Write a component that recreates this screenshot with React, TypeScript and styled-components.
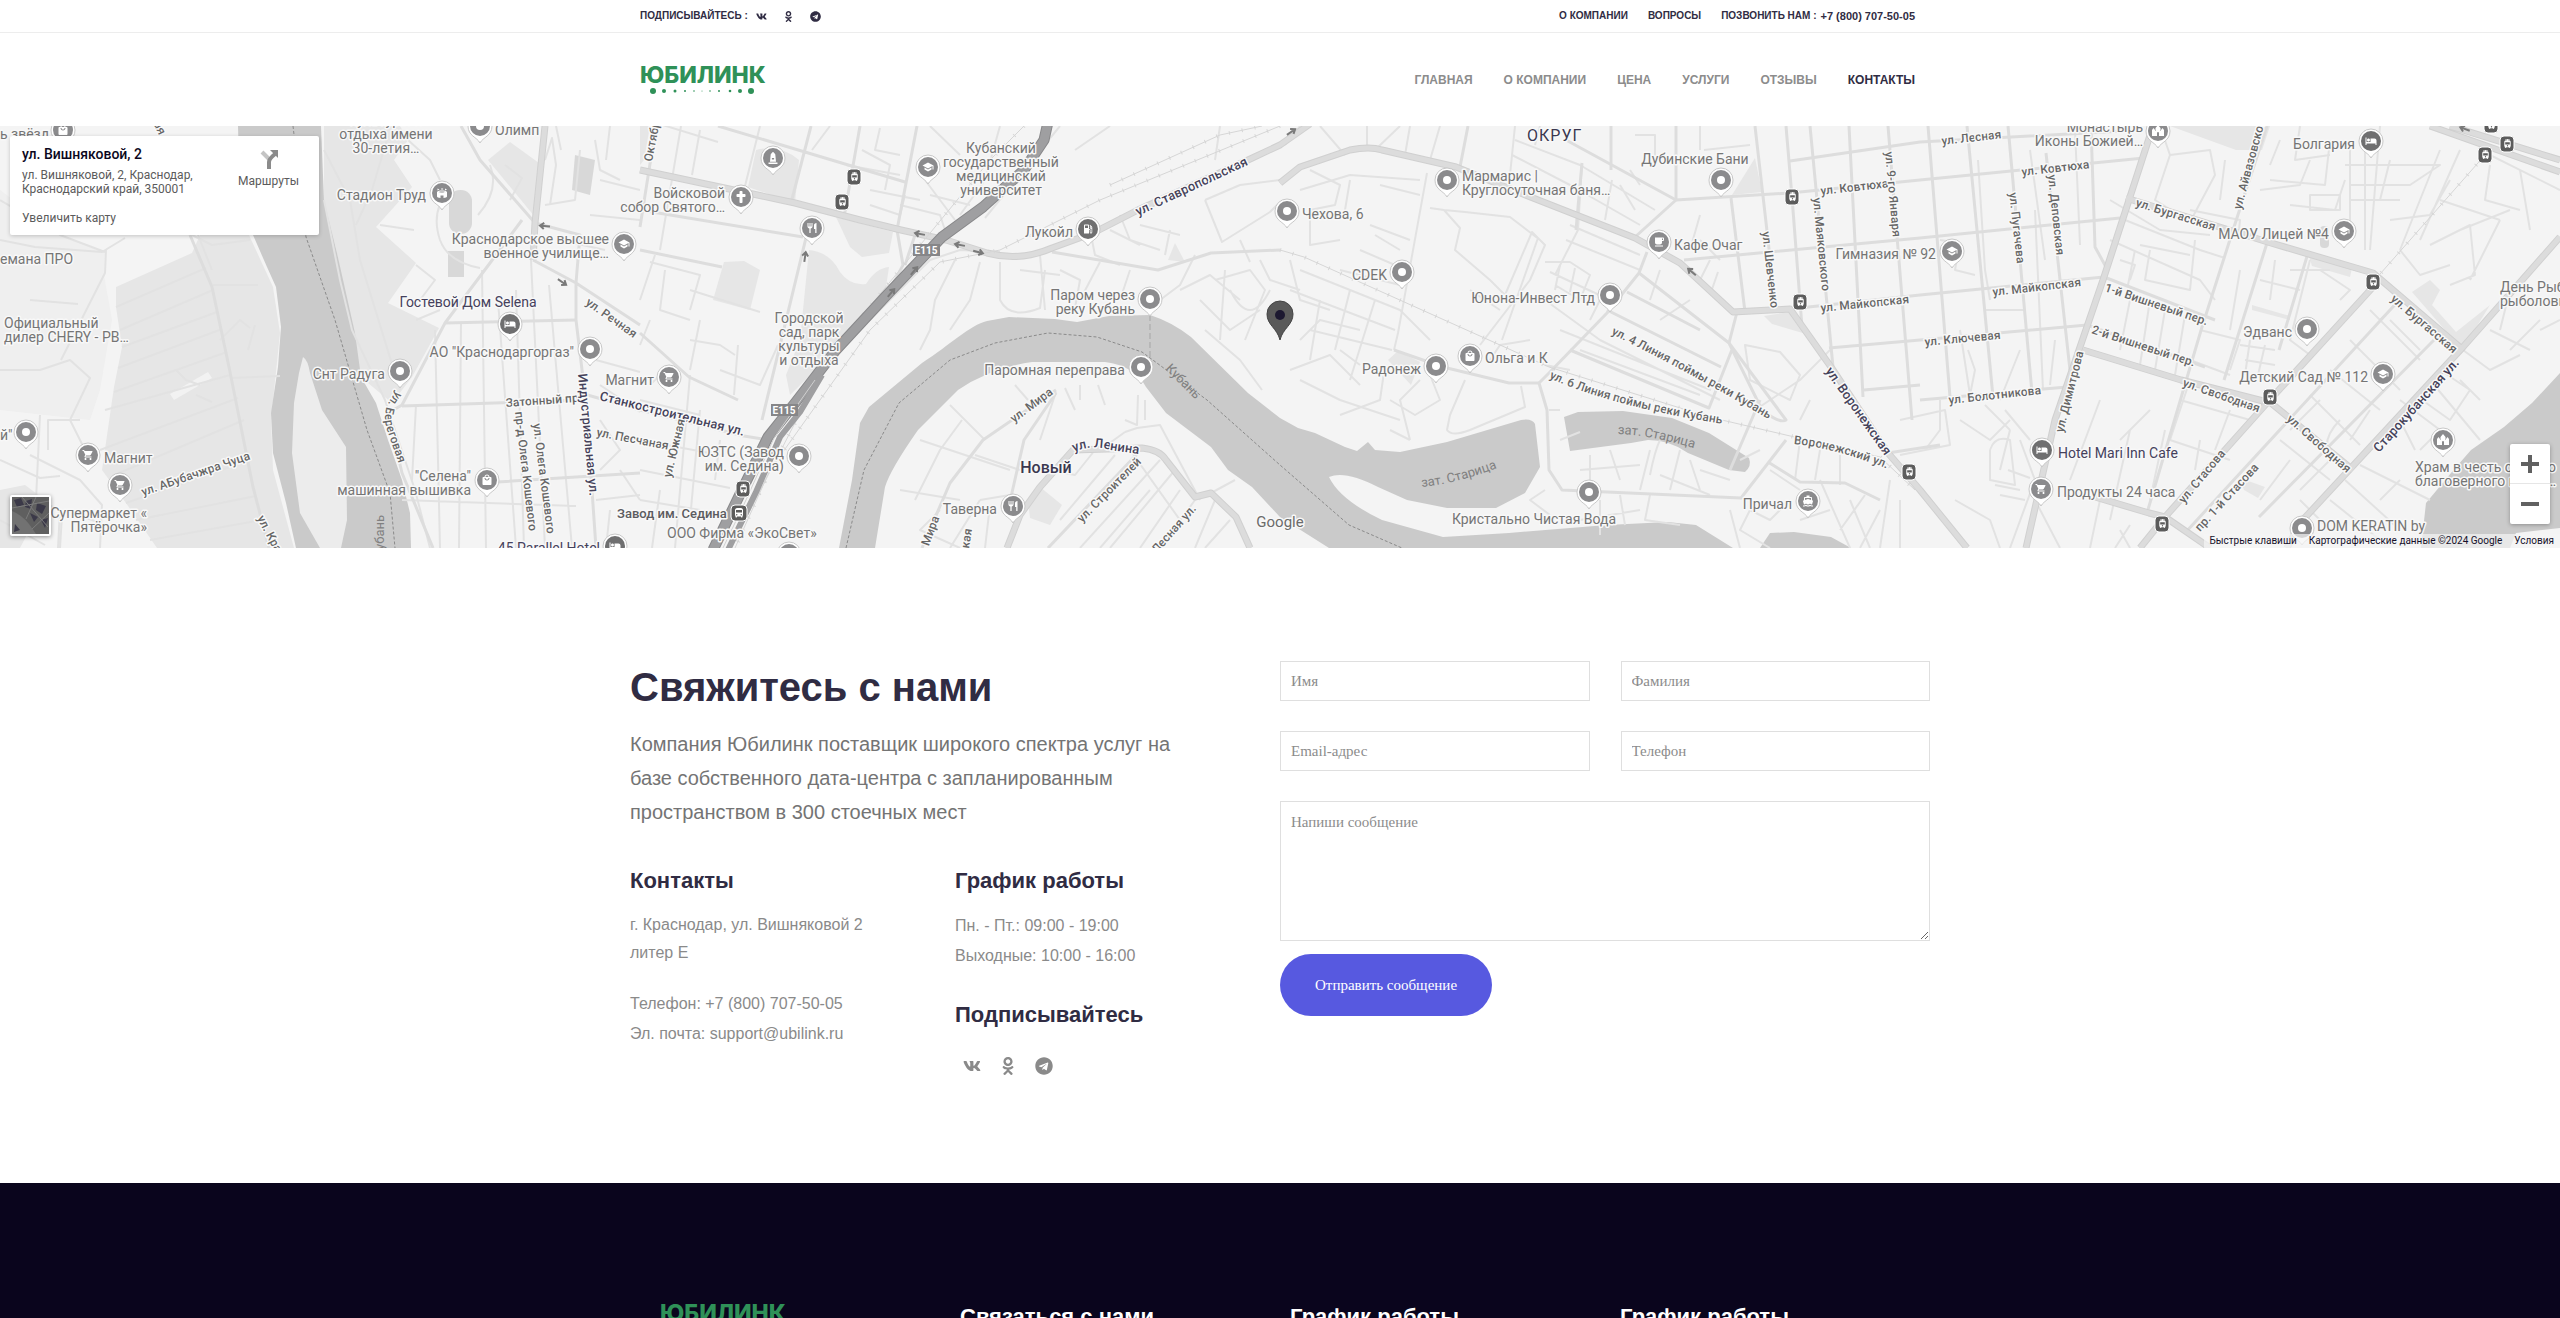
import React from "react";
import styled, { createGlobalStyle } from "styled-components";
import { FaVk, FaOdnoklassniki, FaTelegram, FaCross, FaMonument } from "react-icons/fa";
import {
  MdShoppingCart, MdSchool, MdHotel, MdRestaurant, MdLocalMall, MdLocalGasStation,
  MdLocalCafe, MdTram, MdDirectionsBus, MdDirectionsBoat, MdStadium,
} from "react-icons/md";
import type { IconType } from "react-icons";

const ink = "#302c43";
const sans = `"Liberation Sans", Arial, sans-serif`;
const serif = `"Liberation Serif", "Times New Roman", serif`;
const roboto = `Roboto, "Liberation Sans", sans-serif`;

const GlobalStyle = createGlobalStyle`
  * { box-sizing: border-box; }
  body { margin: 0; background: #fff; font-family: ${sans}; color: ${ink}; }
  a { color: inherit; text-decoration: none; }
  h1, h2, p { margin: 0; }
`;

const Page = styled.div`
  height: 100vh;
  overflow: hidden;
`;

const Container = styled.div`
  width: 100%;
  max-width: 1300px;
  margin: 0 auto;
`;

/* ---------- header ---------- */

const TopBar = styled.div`
  border-bottom: 1px solid #ededed;
  font-size: 10px;
  font-weight: 700;
  line-height: 30px;
  text-transform: uppercase;
`;

const TopRow = styled(Container)`
  display: flex;
  justify-content: space-between;
  height: 32px;
  padding: 0 15px 0 10px;
`;

const TopGroup = styled.div<{ $gap: number }>`
  display: flex;
  align-items: center;
  gap: ${(p) => p.$gap}px;
`;

const TopIcons = styled.div`
  display: flex;
  gap: 15px;
  a { display: flex; width: 12px; justify-content: center; }
`;

const PhoneLink = styled.a`
  display: flex;
  align-items: center;
  gap: 4px;
`;

const PhoneNumber = styled.span`
  font-size: 11px;
`;

const NavRow = styled(Container)`
  display: flex;
  align-items: center;
  justify-content: space-between;
  height: 93px;
  padding: 0 15px 0 10px;
`;

const Nav = styled.nav`
  display: flex;
  gap: 31px;
`;

const NavLink = styled.a<{ $active?: boolean }>`
  font-size: 12px;
  font-weight: 700;
  line-height: 20px;
  text-transform: uppercase;
  color: ${(p) => (p.$active ? ink : "#8c8c8c")};
`;

const LogoLink = styled.a`
  display: flex;
  flex-direction: column;
  width: 128px;
`;

const LogoWord = styled.span`
  font: 800 23px/20px Inter, ${sans};
  color: #2f9158;
`;

const Logo = () => (
  <LogoLink href="#" aria-label="Юбилинк">
    <LogoWord>ЮБИЛИНК</LogoWord>
    <svg width="128" height="10" viewBox="0 0 128 10" fill="#2f9158" aria-hidden="true">
      {[[13, 3], [24, 2], [35, 1.5], [45, 1], [54, 0.8], [62, 0.5], [70, 0.8], [79, 1], [90, 1.3], [100, 2], [111, 3]].map(
        ([x, r]) => <circle key={x} cx={x} cy="6" r={r} />
      )}
    </svg>
  </LogoLink>
);

/* ---------- map ---------- */

const MapFrame = styled.section`
  position: relative;
  height: 422px;
  overflow: hidden;
  background: #f5f5f5;
  font-family: ${roboto};
`;

const MapCanvas = styled.svg`
  display: block;
  width: 100%;
  height: 100%;
  text { font-family: ${roboto}; paint-order: stroke; stroke: #f8f8f8; stroke-width: 3px; stroke-linejoin: round; }
`;

const water = [
  "M238 126H321L324 200L337 253L355 333L361 377L376 403L388 440L402 480L410 513L411 548H296L286 503L273 453L271 413L278 367L281 327L276 287L267 267L253 235L240 200Z",
  "M839 548L852 480L860 423L869 407L922 363C950 345 970 325 987 321L1009 317L1055 319L1077 322L1109 316L1150 315Q1172 322 1191 337L1248 393L1280 418L1298 428L1315 433L1345 447L1357 451L1368 442L1375 450L1400 452L1447 442L1521 420Q1532 418 1535 424L1540 467L1525 493L1496 508L1447 508L1407 500L1378 487Q1345 470 1329 477Q1340 500 1382 520L1443 537L1509 533L1607 525L1668 522L1696 525L1733 548H1329L1280 517L1252 487L1228 470L1211 447L1166 413L1146 387Q1135 366 1105 362L1032 362Q990 368 958 390L918 430Q890 470 885 487L875 548Z",
  "M1564 417L1578 412L1623 411L1672 418L1709 433L1749 458Q1752 466 1745 472L1729 470L1688 453Q1670 440 1648 440L1631 443L1570 451Z",
  "M1760 548L1770 533L1794 532L1831 537L1851 548Z",
  "M2560 373L2532 403L2504 427L2471 450L2451 473L2426 503L2421 548H2510L2516 533L2560 528Z",
];

const greens = [
  "M116 287L192 253L200 235H249L273 287L280 333L271 420L273 470L294 548H157L126 503L102 470L114 387L122 347L116 307Z",
  "M324 126H400L408 140L394 160L412 187L376 227L416 263L388 303L439 328L412 377L392 403L361 377L337 253L324 200Z",
  "M488 160L510 142L539 163L535 217Z",
  "M640 126H650L644 160L640 165Z",
  "M756 150Q780 144 799 160L795 203L748 187Z",
  "M836 217L893 232L889 253L862 257L850 247Z",
  "M809 250Q830 252 840 272Q850 286 866 284Q876 268 889 267L885 293L836 350L790 395L786 375L800 340Z",
  "M724 262L744 261L760 270L750 310L713 300Z",
  "M1028 500L1040 487L1062 505L1050 525L1030 518Z",
  "M1168 260L1175 243L1185 262Z",
  "M1388 360L1398 351L1420 362L1411 385Z",
  "M1732 195L1755 158L1762 192Z",
  "M1764 316L1790 312L1806 334L1772 324Z",
  "M2170 126H2270L2262 150L2236 150Z",
  "M2309 256L2352 268L2350 277L2312 266Z",
  "M2412 292L2430 280L2440 290L2432 305L2456 332L2490 305L2462 350L2452 338Z",
  "M2240 478L2265 487L2258 498L2244 490Z",
  "M2252 305L2290 316V320L2252 310Z",
  "M0 490L25 485L45 500L20 548H0Z",
];

const minorRoads = [
  "M116 307L206 268 M120 330L213 290 M122 347L217 312 M118 368L222 329 M114 392L227 352 M105 410L230 375 M100 450L238 398 M112 476L244 420 M126 503L250 460 M136 520L256 496 M150 540L262 520",
  "M0 200L60 235L105 252 M0 240L35 247L102 252L125 238 M192 235L212 245L250 240 M61 360L105 273L106 250 M30 300L78 304 M0 370H40L70 360L90 378L82 395L70 420L90 460 M80 420H48V450 M40 415L36 500L60 510L58 548 M30 455L80 480L102 505L100 548 M0 460L40 478L60 476 M60 548L62 515 M0 520L45 545 M78 515L120 530",
  "M213 285H258 M230 378L280 376 M220 340L240 320L250 328 M255 325L248 350 M198 235L212 270 M176 370L186 380L200 385 M196 395L212 402",
  "M324 200L340 280L352 330L385 400L415 490L430 548 M324 150L350 200L360 260L400 390 M388 136L372 190L356 225 M408 140L430 160L440 180 M450 190Q430 210 440 240Q448 262 480 268 M490 165Q500 190 478 215 M414 230L380 225 M416 265L435 280L420 300 M440 310L416 320 M505 165L522 178L510 200 M545 160L552 138 556 165L550 205 M556 126L561 150 M580 150L575 200L545 205 M595 140L600 170L620 180 M610 126L606 160 M560 240L605 250 M590 215L640 220 M600 180L640 190",
  "M435 330L440 548 M461 322L459 548 M482 270L486 548 M498 300L516 548 M516 290L524 548 M531 260L545 548 M549 285L572 548 M416 405L412 480 M402 500L576 506 M596 360L640 372 M600 420L620 450L600 470 M596 500L640 495 M610 510L606 548 M620 470L640 500 M600 385L640 412",
  "M681 126L660 250 M640 118L718 142 M700 130L692 175 M760 126L742 198 M830 126L812 150 M650 262L700 275L690 310 M665 270L660 310L690 320 M690 290L760 312 M655 255L640 300 M690 340L720 345L735 355 M700 320L690 370 M650 320L640 345 M738 345L734 395 M720 370L760 385L778 345 M670 365L650 385 M640 400L700 415 M690 375L675 548 M640 440L720 455 M640 470L730 488 M660 490L652 548 M700 410L690 520 M640 500L700 510 M720 440L715 480",
  "M862 150L890 165L885 190 M846 165L900 175 M870 190L920 200 M880 128L875 150L900 155 M930 126L960 155 M900 205L940 215L945 230 M925 180L955 220 M870 205L900 215L905 195 M930 195L970 205 M1000 126L985 180L960 215 M1060 126L1020 175L985 218 M1075 150L1110 126",
  "M830 360L870 320L930 260L960 250L1000 252 M955 260L935 300L930 330L920 350 M980 262L970 300L950 330 M1000 262V300Q1010 320 1040 308L1045 270 M1020 270L1060 275 M1040 255L1045 310 M1060 270L1080 280L1075 308 M1090 230L1095 255L1120 265 M1110 230L1140 245 M1100 262L1080 300 M1130 270L1120 300 M1120 215L1130 240L1160 250 M1140 225L1180 235 M1170 230L1165 255 M1195 255L1180 285L1160 300",
  "M1205 200L1222 242L1270 212L1280 202 M1205 200L1240 185L1280 180 M1220 126L1215 160 M1240 240L1250 262 M1180 290L1210 275L1240 300 M1200 300L1230 330L1260 310 M1215 280L1250 270L1265 290L1245 340 M1230 290Q1250 330 1270 290 M1205 330L1240 360L1262 390 M1225 270L1220 340 M1260 260L1270 280L1300 290 M1290 260L1300 300L1330 310 M1300 340L1320 320L1360 330",
  "M1300 270L1400 310L1430 340 M1290 290L1395 330 M1310 330L1392 350 M1320 300L1310 360 M1350 290L1335 350 M1375 300L1350 380 M1290 370L1330 355L1360 385 M1300 380L1340 400L1400 420 M1420 380L1400 400L1410 440 M1430 375L1440 400L1415 415L1390 400 M1340 350L1360 365 M1385 365L1380 400L1340 415 M1465 380L1450 415L1447 430Q1452 437 1470 430L1525 407L1521 386 M1490 360L1500 345L1530 340 M1410 440L1390 430",
  "M1427 173L1398 333L1394 350 M1310 170L1340 185L1335 205L1310 210V245L1340 240 M1300 190L1350 175L1420 180 M1350 180L1345 210 M1380 185L1420 195 M1370 225L1410 240 M1375 235L1400 250 M1360 250L1395 265 M1340 270L1400 285 M1430 208L1444 210L1460 228L1455 250L1490 280L1505 295L1532 232L1545 245L1530 280L1480 345 M1444 210L1465 212L1510 217L1540 240 M1538 238L1502 340 M1545 262L1570 262L1590 275L1580 300L1555 285 M1550 272L1610 300 M1560 265L1555 290 M1575 268L1570 292 M1470 290L1500 310",
  "M1515 126L1510 175 M1515 140L1580 165L1655 210 M1512 155L1570 185L1640 225 M1540 126L1535 145 M1582 163L1578 230L1555 275 M1566 240L1640 270 M1570 225L1640 255 M1612 180L1605 220 M1400 126L1375 150 M1410 126L1405 155 M1300 126L1285 145 M1320 126L1345 155 M1367 126V150 M1440 126L1430 160 M1635 135H1655V160 M1620 185L1635 210 M1640 185L1630 170 M1704 150L1750 145 M1700 126V150",
  "M1545 300L1600 340L1720 400 M1560 330L1640 362L1711 390 M1590 320L1600 300 M1570 370L1545 365 M1650 300L1660 270 M1660 320L1690 300 M1580 350L1700 395 M1690 250L1700 215 M1700 280L1710 260 M1710 295L1718 272 M1745 345L1780 352L1800 375L1790 400L1750 380Z M1755 410L1800 380L1830 350 M1800 420L1810 400 M1700 240L1720 260",
  "M1549 410H1560 M1560 440L1580 432 M1590 455V490 M1610 450L1620 480 M1580 470L1640 465 M1650 450L1640 490 M1660 440Q1655 450 1650 475 M1680 450L1670 490 M1690 460L1700 490 M1660 475L1710 495 M1700 470L1730 480 M1545 490L1530 500L1550 515 M1600 500V535 M1580 520L1640 510 M1620 495L1625 525 M1650 495L1645 520L1680 525 M1740 460L1760 450 M1770 470L1800 490 M1800 440L1795 480 M1820 450L1815 480 M1840 455V485 M1790 500L1770 520L1750 510L1740 530L1770 548 M1800 520L1830 510 M1820 480L1850 548 M1850 500L1870 548 M1865 495L1840 530 M1880 510L1860 548 M1890 480L1880 548 M1900 500V548 M1730 510L1740 548",
  "M1940 240L1960 243L1955 270L1975 275 M1978 160L1985 270L1990 300 M2030 150L2045 260 M2035 210L2043 390 M2075 130L2080 245 M1985 310H2025 M1968 350L1975 370L1970 395 M2000 400L2020 350 M2055 340L2050 385 M1960 330L1970 395 M1900 420L1945 410L1950 445L1900 455 M1940 400V430L1925 450 M1985 405L2010 430 M1960 420L1990 440L2010 420 M2005 410L2030 440 M1990 450V480L2015 485L2010 440Q1995 435 1990 450 M1995 485L2020 490 M2000 495L2025 500 M2008 470L2030 478 M2020 440L2035 480L2010 548 M1955 500L1990 520L2000 548",
  "M2110 200L2160 230L2210 235 M2160 126L2170 155L2155 200L2190 222L2215 175L2210 150L2170 155 M2125 220L2200 250L2225 258 M2120 260L2135 265L2130 280 M2135 250L2128 285 M2150 250L2145 280L2190 290L2195 240 M2140 245L2190 255 M2110 240L2200 280L2215 300 M2130 300L2120 350 M2150 300L2140 365 M2165 310L2155 370 M2185 315L2175 375 M2200 330L2240 340L2230 370 M2190 360L2230 375 M2190 210L2240 220L2238 240 M2220 200L2225 160 M2260 190L2300 185L2310 160 M2280 140L2270 165 M2300 126L2295 160L2330 155",
  "M2330 140L2325 185L2270 180 M2345 180L2335 210L2290 205 M2350 150V230 M2350 200H2400 M2310 195H2340V210H2310Z M2365 130V250 M2380 126L2370 250 M2345 165H2440L2410 185H2350 M2390 160L2380 200 M2390 220L2430 215L2450 180 M2440 150L2400 250 M2460 150L2420 240 M2480 150L2560 190 M2490 165L2485 200L2520 210 M2510 210L2460 230 M2500 220L2470 280 M2430 245L2470 225L2475 275L2450 285 M2440 200L2500 220 M2520 170L2530 230 M2400 250L2420 275L2450 265",
  "M2240 270L2230 330 M2260 280L2300 290 M2275 260L2270 300 M2290 270H2330 M2310 260L2290 340L2310 355 M2320 270L2350 290L2340 300 M2240 345L2275 350 M2245 360L2275 365 M2250 340L2245 375 M2265 345L2258 375 M2390 320L2420 350 M2350 340L2400 390 M2370 310L2420 360 M2330 370L2380 410 M2310 395L2360 445 M2400 300L2380 320 M2420 320L2440 340 M2280 440L2330 480 M2290 460L2260 500 M2320 400L2290 430 M2340 420Q2320 440 2330 460L2300 490 M2370 410L2350 440 M2400 400L2440 430L2420 450 M2415 395L2450 420L2470 390L2440 370 M2430 380L2480 440 M2400 420L2415 450 M2460 380L2480 400",
  "M2463 350L2490 370L2520 355 M2490 330L2530 350 M2540 320L2510 350 M2540 330L2560 320 M2510 290L2500 330 M2120 440L2150 410 M2100 400L2070 480 M2130 430L2110 520 M2165 430L2150 500 M2190 380L2170 440L2230 460 M2180 400L2250 420 M2200 440L2195 470 M2230 410L2215 450 M2345 480L2400 530 M2360 465L2430 500 M2330 500L2380 540 M2300 500L2330 530 M2380 500L2400 480 M2100 500L2090 548 M2120 530L2130 548 M2130 525L2115 548 M2035 500L2060 548 M2000 470L2010 430",
  "M1056 392L1040 440 M1065 388L1075 410 M1080 385V400 M1098 385L1105 405 M1138 395L1137 425L1125 420 M1145 400V420 M1125 432L1137 428L1160 425L1200 500 M1100 450L1125 432 M1015 385L1028 400 M950 405L985 440 M962 420L940 450L915 500 M920 440L1010 470 M900 490L960 500 M975 455L1020 470 M1095 450L1075 475L1050 470 M1115 455L1060 520 M1160 460L1080 548 M1175 470L1110 548 M1130 450L1180 520 M1150 490L1100 548 M1180 490L1140 548 M1195 500L1160 548 M980 500L1010 495 M980 500L950 548 M990 505L985 548 M940 510L920 530L960 548 M1211 493L1235 480 M1215 500L1195 548 M1230 520L1205 548",
];

const streets = [
  "M461 126L480 160L535 223 M522 220L490 263L445 323L402 405L388 413L402 473L433 548 M445 323L576 320 M402 406L584 400 M482 483L640 473",
  "M533 260L576 283L640 325 M535 223L580 235L576 283 M190 235L212 287L229 367L253 487L269 548 M576 283L576 320L586 403L596 548",
  "M656 126L640 227 M640 210L803 237 M811 217L762 420 M811 126L791 203 M860 126L844 217 M917 126L897 230 M718 126L905 182 M640 250L722 267 M640 333L689 377L738 400 M897 230L903 265L890 290 M915 235L905 265 M584 394L640 410L744 436L768 440",
  "M1056 390L983 440L950 483L922 548 M1056 393L1024 440L1011 497 M1138 453L1048 548 M1052 252L1158 270L1211 253L1280 250",
  "M1280 183L1300 167 M1566 140L1676 200L1635 237 M1647 252L1639 273L1607 313L1549 373L1539 383L1547 410L1549 470L1562 490L1741 498L1786 440",
  "M1639 273L1729 343L1786 420Q1780 424 1762 410L1729 343 M1627 292L1700 330 M1607 310L1721 367 M1570 350L1709 408L1733 347 M1582 163L1576 230 M1611 126V170 M1676 126V200 M1468 126L1460 167 M1394 350L1443 367L1509 383L1539 383",
  "M1760 400L1730 470 M1768 462L1800 482L1845 483L1880 500 M1729 343L1737 312",
  "M1731 198L1745 312 M1755 126L1776 310 M1786 126L1792 197L1802 327 M1810 126L1833 367 M1849 126L1863 397 M1888 126L1912 420 M1928 126L1950 397 M1967 126L1993 397 M2008 126L2032 393 M2046 153L2070 370 M2091 126L2095 247L2106 267",
  "M1790 161L1920 142L2142 130 M1676 200L1790 193L1920 180L2144 158 M1684 260L1920 238L2120 218 M1790 309L1920 295L2104 277 M1829 348L1920 340L2087 325 M1864 390L1920 385 M1920 400L2067 387 M1888 453L1940 445",
  "M2267 126L2234 227L2202 327L2147 513 M2267 243L2224 380 M2308 253L2279 350 M2402 297L2185 533 M2434 340L2259 517 M2104 277L2215 320 M2087 325L2205 367",
];

const avenues = [
  "M640 170L795 203L860 220L901 230L946 240L987 253Q1020 262 1052 248L1093 233L1138 210L1248 160L1280 145L1310 124",
  "M1280 183L1300 167L1350 150Q1370 146 1382 150L1456 167L1533 198L1635 238L1680 263L1733 312L1790 309L1831 367L1888 453L1920 490L1967 548",
  "M1007 548L1020 515L1040 487L1073 450L1142 448Q1160 450 1166 460L1195 497L1211 493L1236 517L1250 548",
  "M2126 198L2271 243L2373 273L2463 350 M2083 350L2181 380L2271 403L2353 470",
  "M2373 287L2267 403L2165 517L2140 548 M2560 237L2463 347L2300 523L2287 548 M2095 497L2149 513L2165 517L2210 548",
  "M2430 126L2560 172 M2450 126L2560 160 M2153 126L2104 277L2055 420L2026 548 M545 126L535 223L533 260",
];

const rails = [
  "M1024 126L990 160L830 355L745 520 M1280 126L1100 200L1000 250L940 262L870 330L770 470L735 548",
  "M1280 250L1304 257L1549 367L1709 417L1880 457L1915 490",
  "M1110 185L1220 135L1262 126 M2485 155L2373 282",
];

const borders = [
  "M293 126L306 237L335 320L367 430L390 493L395 548",
  "M846 548L864 470L899 403L950 360L995 343L1048 333L1097 337L1142 352L1207 400L1280 465L1349 525L1402 548",
];

type RoadLabel = { t: string; d: string; k?: "dark" | "water" };
const roadLabels: RoadLabel[] = [
  { t: "ул. АБубачжра Чуца", d: "M143 496L260 456" },
  { t: "ул. Береговая", d: "M397 391Q380 408 387 430L408 490" },
  { t: "Затонный пр.", d: "M506 407L590 401" },
  { t: "пр-д Олега Кошевого", d: "M515 412L531 548" },
  { t: "ул. Олега Кошевого", d: "M533 424L549 548" },
  { t: "Индустриальная ул.", d: "M578 374L592 520", k: "dark" },
  { t: "ул. Речная", d: "M585 304L650 350" },
  { t: "ул. Красных", d: "M257 518L300 600" },
  { t: "Кубань", d: "M384 558L384 480", k: "water" },
  { t: "ская", d: "M148 112L166 150" },
  { t: "Октябрьская", d: "M652 162L670 70" },
  { t: "ул. Ставропольская", d: "M1138 216L1280 150", k: "dark" },
  { t: "Кубань", d: "M1165 369L1220 424", k: "water" },
  { t: "Станкостроительная ул.", d: "M599 400L780 445", k: "dark" },
  { t: "ул. Песчаная", d: "M596 436L700 456" },
  { t: "ул. Южная", d: "M671 478L690 400" },
  { t: "ул. Мира", d: "M1014 423L1068 383" },
  { t: "ул. Ленина", d: "M1074 452Q1092 444 1110 450L1180 460", k: "dark" },
  { t: "ул. Мира", d: "M922 564L950 490" },
  { t: "ская", d: "M968 555L975 510" },
  { t: "ул. Строителей", d: "M1082 523L1156 448" },
  { t: "Лесная ул.", d: "M1157 554L1210 494" },
  { t: "ул. Ковтюха", d: "M1821 195L1900 186" },
  { t: "ул. 9-го Января", d: "M1885 152L1894 250" },
  { t: "ул. Маяковского", d: "M1813 198L1824 310" },
  { t: "ул. Шевченко", d: "M1762 232L1772 320" },
  { t: "ул. Майкопская", d: "M1821 312L1930 301" },
  { t: "ул. 4 Линия поймы реки Кубань", d: "M1611 334Q1690 372 1780 426" },
  { t: "ул. 6 Линия поймы реки Кубань", d: "M1549 378Q1620 410 1750 428" },
  { t: "зат. Старица", d: "M1422 487Q1465 483 1530 455", k: "water" },
  { t: "зат. Старица", d: "M1618 434Q1660 435 1730 460", k: "water" },
  { t: "ул. Воронежская", d: "M1825 371L1904 483", k: "dark" },
  { t: "Воронежский ул.", d: "M1794 444Q1840 448 1910 478" },
  { t: "ул. Лесная", d: "M1942 145L2030 135" },
  { t: "ул. Ковтюха", d: "M2022 176L2110 166" },
  { t: "ул. Пугачева", d: "M2009 193L2020 290" },
  { t: "ул. Деповская", d: "M2048 175L2060 290" },
  { t: "ул. Бургасская", d: "M2135 206L2240 239" },
  { t: "ул. Айвазовского", d: "M2241 210L2272 96" },
  { t: "ул. Майкопская", d: "M1993 296L2100 284" },
  { t: "1-й Вишневый пер.", d: "M2104 291L2220 330" },
  { t: "2-й Вишневый пер.", d: "M2091 333L2210 372" },
  { t: "ул. Ключевая", d: "M1925 346L2020 337" },
  { t: "ул. Болотникова", d: "M1949 404L2060 392" },
  { t: "ул. Димитрова", d: "M2063 433L2088 335" },
  { t: "ул. Свободная", d: "M2182 386L2280 420" },
  { t: "ул. Свободная", d: "M2286 420L2370 494" },
  { t: "ул. Бургасская", d: "M2390 300L2480 377" },
  { t: "Старокубанская ул.", d: "M2379 453L2478 343", k: "dark" },
  { t: "ул. Стасова", d: "M2184 504L2239 438" },
  { t: "пр. 1-й Стасова", d: "M2200 532L2273 453" },
];

type Place = { l: string[]; x: number; y: number; a?: "end" | "middle"; dark?: boolean };
const places: Place[] = [
  { l: ["ь звёзд"], x: 0, y: 139 },
  { l: ["культуры и", "отдыха имени", "30-летия…"], x: 386, y: 125, a: "middle" },
  { l: ["Олимп"], x: 495, y: 135 },
  { l: ["Стадион Труд"], x: 426, y: 200, a: "end" },
  { l: ["Краснодарское высшее", "военное училище…"], x: 609, y: 244, a: "end" },
  { l: ["емана ПРО"], x: 0, y: 264 },
  { l: ["Гостевой Дом Selena"], x: 468, y: 307, a: "middle", dark: true },
  { l: ["АО \"Краснодаргоргаз\""], x: 574, y: 357, a: "end" },
  { l: ["Снт Радуга"], x: 385, y: 379, a: "end" },
  { l: ["Официальный", "дилер CHERY - РВ…"], x: 4, y: 328 },
  { l: ["й\""], x: 0, y: 440 },
  { l: ["Магнит"], x: 104, y: 463 },
  { l: ["Супермаркет «", "Пятёрочка»"], x: 147, y: 518, a: "end" },
  { l: ["\"Селена\"", "машинная вышивка"], x: 471, y: 481, a: "end" },
  { l: ["45 Parallel Hotel"], x: 600, y: 553, a: "end", dark: true },
  { l: ["Войсковой", "собор Святого…"], x: 725, y: 198, a: "end" },
  { l: ["Кубанский", "государственный", "медицинский", "университет"], x: 1001, y: 153, a: "middle" },
  { l: ["Лукойл"], x: 1073, y: 237, a: "end" },
  { l: ["Паром через", "реку Кубань"], x: 1135, y: 300, a: "end" },
  { l: ["Паромная переправа"], x: 1125, y: 375, a: "end" },
  { l: ["Городской", "сад, парк", "культуры", "и отдыха"], x: 809, y: 323, a: "middle" },
  { l: ["Магнит"], x: 654, y: 385, a: "end" },
  { l: ["ЮЗТС (Завод", "им. Седина)"], x: 784, y: 457, a: "end" },
  { l: ["ООО Фирма «ЭкоСвет»"], x: 667, y: 538 },
  { l: ["Таверна"], x: 997, y: 514, a: "end" },
  { l: ["Мармарис |", "Круглосуточная баня…"], x: 1462, y: 181 },
  { l: ["Чехова, 6"], x: 1302, y: 219 },
  { l: ["CDEK"], x: 1387, y: 280, a: "end" },
  { l: ["Юнона-Инвест Лтд"], x: 1595, y: 303, a: "end" },
  { l: ["Ольга и К"], x: 1485, y: 363 },
  { l: ["Радонеж"], x: 1421, y: 374, a: "end" },
  { l: ["Кристально Чистая Вода"], x: 1534, y: 524, a: "middle" },
  { l: ["Дубинские Бани"], x: 1695, y: 164, a: "middle" },
  { l: ["Кафе Очаг"], x: 1674, y: 250 },
  { l: ["Гимназия № 92"], x: 1936, y: 259, a: "end" },
  { l: ["Причал"], x: 1792, y: 509, a: "end" },
  { l: ["Монастырь", "Иконы Божией…"], x: 2143, y: 132, a: "end" },
  { l: ["Болгария"], x: 2355, y: 149, a: "end" },
  { l: ["МАОУ Лицей №4"], x: 2329, y: 239, a: "end" },
  { l: ["Эдванс"], x: 2292, y: 337, a: "end" },
  { l: ["Детский Сад № 112"], x: 2368, y: 382, a: "end" },
  { l: ["День Рыбака", "рыболовный"], x: 2500, y: 292 },
  { l: ["Храм в честь святого", "благоверного князя…"], x: 2415, y: 472 },
  { l: ["Hotel Mari Inn Cafe"], x: 2058, y: 458, dark: true },
  { l: ["Продукты 24 часа"], x: 2057, y: 497 },
  { l: ["DOM KERATIN by"], x: 2317, y: 531 },
];

const CastleIcon: IconType = ({ size, color, ...rest }) => (
  <svg width={size} height={size} viewBox="0 0 12 12" fill={color} {...(rest as React.SVGProps<SVGSVGElement>)}>
    <path d="M0 11V5L1.500 3L3 5V6H3.500V3L6 0L8.500 3V6H9V5L10.500 3L12 5V11H7V8A1 1 0 0 0 5 8V11Z" />
  </svg>
);

const pins: [number, number, IconType?][] = [
  [63, 131, MdLocalMall], [480, 127], [442, 194, MdStadium], [624, 245, MdSchool], [510, 325, MdHotel],
  [590, 350], [400, 372], [26, 433], [88, 456, MdShoppingCart], [120, 486, MdShoppingCart],
  [487, 481, MdLocalMall], [615, 547, MdHotel], [773, 159, FaMonument], [741, 198, FaCross], [812, 229, MdRestaurant],
  [928, 168, MdSchool], [1088, 230, MdLocalGasStation], [1150, 300], [1141, 368], [669, 378, MdShoppingCart],
  [799, 457], [789, 555], [1013, 507, MdRestaurant], [1447, 181], [1287, 212], [1402, 273], [1610, 296],
  [1470, 357, MdLocalMall], [1436, 367], [1589, 493], [1721, 181], [1659, 243, MdLocalCafe], [1952, 252, MdSchool],
  [1808, 502, MdDirectionsBoat], [2158, 132, CastleIcon], [2371, 142, MdHotel], [2344, 232, MdSchool], [2307, 330],
  [2383, 375, MdSchool], [2443, 441, CastleIcon], [2042, 451, MdHotel], [2041, 490, MdShoppingCart], [2302, 529],
];

const trams: [number, number][] = [
  [854, 177], [842, 202], [743, 489], [1792, 197], [1800, 302], [1909, 472],
  [2491, 125], [2507, 144], [2485, 155], [2373, 282], [2270, 397], [2162, 524],
];

const arrows: [number, number, number][] = [
  [545, 226, 185], [562, 282, 35], [920, 234, 190], [960, 245, 190], [978, 252, 15],
  [914, 271, -50], [891, 293, -50], [805, 257, -82], [1291, 132, -35], [1692, 272, 220], [2465, 129, 200],
];

const Pin = ({ x, y, icon: Icon }: { x: number; y: number; icon?: IconType }) => (
  <g>
    <path
      d={`M${x} ${y + 16}C${x - 3} ${y + 10} ${x - 12} ${y + 9} ${x - 12} ${y - 1}A12 12 0 0 1 ${x + 12} ${y - 1}C${x + 12} ${y + 9} ${x + 3} ${y + 10} ${x} ${y + 16}Z`}
      fill="#fff" stroke="#c8c8c8" strokeWidth="1"
    />
    <circle cx={x} cy={y - 1} r="10" fill={Icon === MdHotel || Icon === MdLocalGasStation ? "#6f6f70" : "#8b8b8d"} />
    {Icon ? <Icon x={x - 6} y={y - 7} size={12} color="#fff" /> : <circle cx={x} cy={y - 1} r="4" fill="#fff" />}
  </g>
);

const MapDrawing = () => (
  <MapCanvas viewBox="0 126 2560 422" preserveAspectRatio="xMidYMid slice" role="img" aria-label="Карта">
    <rect y="126" width="2560" height="422" fill="#f4f4f4" />
    <path d="M0 190L60 235L105 252L104 275L112 320L100 390L90 420L0 410Z" fill="#efefef" />
    <g fill="#e6e6e6">{greens.map((d) => <path key={d} d={d} />)}</g>
    <g fill="#d8d8d8">
      <rect x="449" y="190" width="23" height="44" rx="11" />
      <rect x="448" y="251" width="16" height="26" />
      <path d="M575 155L595 160L590 195L572 190Z" />
      <rect x="2320" y="226" width="9" height="22" rx="4" />
    </g>
    <path d="M170 394L208 372L212 378L174 400Z" fill="#f2f2f2" />
    <g fill="#cacaca">{water.map((d) => <path key={d} d={d} />)}</g>
    <path d="M303 357Q308 360 310 373L322 410L346 447L347 520L341 548H320L300 513L292 453L294 403L299 373Z" fill="#ececec" />
    <g fill="none" strokeLinejoin="round">
      <g stroke="#e2e2e2" strokeWidth="2">{minorRoads.map((d) => <path key={d} d={d} />)}</g>
      <g stroke="#dddddd" strokeWidth="3">{streets.map((d) => <path key={d} d={d} />)}</g>
      <g stroke="#d0d0d0" strokeWidth="7">{avenues.map((d) => <path key={d} d={d} />)}</g>
      <g stroke="#dcdcdc" strokeWidth="5">{avenues.map((d) => <path key={d} d={d} />)}</g>
      <g stroke="#d6d6d6" strokeWidth="1">{rails.map((d) => <path key={d} d={d} />)}</g>
      <g stroke="#d6d6d6" strokeWidth="4" strokeDasharray="1 12">{rails.map((d) => <path key={d} d={d} />)}</g>
      <g stroke="#8a8a8a" strokeWidth="1" strokeDasharray="3 2">{borders.map((d) => <path key={d} d={d} />)}</g>
      <path d="M1150 315V362" stroke="#a5a5a5" strokeDasharray="6 3" />
      <path d="M1048 122L1044 140L1024 170L983 207L942 237L885 297L836 350L795 403L768 437L742 490L713 550" stroke="#88888a" strokeWidth="11" />
      <path d="M1048 122L1044 140L1024 170L983 207L942 237L885 297L836 350L795 403L768 437L742 490L713 550" stroke="#9f9fa1" strokeWidth="9" />
      <path d="M822 375L800 412L780 437L756 492L728 550" stroke="#9f9fa1" strokeWidth="6" />
      <path d="M815 380L774 438L746 500L722 550" stroke="#d0d0d0" strokeWidth="1" />
    </g>
    <g stroke="#7a7a7a" strokeWidth="2" fill="none">
      {arrows.map(([x, y, r]) => <path key={`${x}-${y}`} d="M-5 0H4M1 -3L5 0L1 3" transform={`translate(${x} ${y}) rotate(${r})`} />)}
    </g>
    {roadLabels.map((r, i) => (
      <g key={i}>
        <path id={`road-${i}`} d={r.d} fill="none" />
        <text
          fontSize={r.k ? 13 : 12}
          fontWeight={r.k === "water" ? 400 : 500}
          fill={r.k === "dark" ? "#45425a" : r.k === "water" ? "#808080" : "#666"}
          style={r.k === "water" ? { stroke: "none" } : undefined}
        >
          <textPath href={`#road-${i}`}>{r.t}</textPath>
        </text>
      </g>
    ))}
    {pins.map(([x, y, icon]) => <Pin key={`${x}-${y}`} x={x} y={y} icon={icon} />)}
    {trams.map(([x, y]) => (
      <g key={`${x}-${y}`}>
        <rect x={x - 7} y={y - 8} width="14" height="16" rx="4" fill="#5c5c5c" stroke="#fff" />
        <MdTram x={x - 5} y={y - 6} size={11} color="#fff" />
      </g>
    ))}
    <rect x="731" y="505" width="16" height="16" rx="4" fill="#5c5c5c" stroke="#fff" />
    <MdDirectionsBus x={733} y={507} size={12} color="#fff" />
    {[[926, 250], [784, 410]].map(([x, y]) => (
      <g key={x}>
        <rect x={x - 13} y={y - 6} width="27" height="12" fill="#868688" />
        <text x={x} y={y + 4} textAnchor="middle" fontSize="10" fontWeight="700" fill="#fff" style={{ stroke: "none" }}>E115</text>
      </g>
    ))}
    {places.map((p) => (
      <text key={p.l[0] + p.x} fontSize="14" textAnchor={p.a ?? "start"} fill={p.dark ? "#45415c" : "#757575"}>
        {p.l.map((line, i) => <tspan key={line} x={p.x} y={p.y + i * 14}>{line}</tspan>)}
      </text>
    ))}
    <text x="617" y="518" fontSize="13" fontWeight="500" fill="#5c5c60">Завод им. Седина</text>
    <text x="1046" y="473" fontSize="16" fontWeight="500" textAnchor="middle" fill="#3b3850">Новый</text>
    <text x="1527" y="141" fontSize="16" letterSpacing="1" fill="#3b3850">ОКРУГ</text>
    <path d="M1280 340C1277 328 1267 325 1267 314A13 13 0 0 1 1293 314C1293 325 1283 328 1280 340Z" fill="#5a5a5a" stroke="#444" />
    <circle cx="1280" cy="315" r="5" fill="#1c1830" />
    <text x="1280" y="527" fontSize="15" textAnchor="middle" fill="#6b6b6b">Google</text>
  </MapCanvas>
);

const PlaceCard = styled.div`
  position: absolute;
  top: 10px;
  left: 10px;
  display: flex;
  justify-content: space-between;
  width: 309px;
  height: 99px;
  padding: 9px 20px 9px 12px;
  background: #fff;
  border-radius: 2px;
  box-shadow: 0 1px 4px rgba(0, 0, 0, 0.2);
  color: #5b5b5b;
  font-size: 12px;
  line-height: 14px;
`;

const PlaceTitle = styled.div`
  margin-bottom: 5px;
  font-size: 14px;
  font-weight: 500;
  line-height: 18px;
  color: #0b0720;
`;

const Enlarge = styled.a`
  display: block;
  margin-top: 15px;
`;

const RouteLink = styled.a`
  display: flex;
  flex-direction: column;
  align-items: center;
  gap: 4px;
  padding-top: 3px;
`;

const ZoomBox = styled.div`
  position: absolute;
  right: 10px;
  bottom: 24px;
  width: 40px;
  background: #fff;
  border-radius: 2px;
  box-shadow: 0 1px 4px rgba(0, 0, 0, 0.3);
`;

const ZoomButton = styled.button`
  display: flex;
  align-items: center;
  justify-content: center;
  width: 40px;
  height: 40px;
  padding: 0;
  border: 0;
  background: transparent;
  & + & { box-shadow: 0 -1px 0 #e6e6e6; }
`;

const Satellite = styled.button`
  position: absolute;
  left: 10px;
  bottom: 12px;
  width: 41px;
  height: 41px;
  padding: 0;
  border: 2px solid #fff;
  border-radius: 2px;
  overflow: hidden;
  background: #5b5b5b;
  box-shadow: 0 1px 4px rgba(0, 0, 0, 0.4);
  svg { display: block; }
`;

const Credits = styled.div`
  position: absolute;
  right: 0;
  bottom: 0;
  display: flex;
  gap: 12px;
  padding: 0 6px;
  background: rgba(245, 245, 245, 0.7);
  color: #15112b;
  font-size: 10px;
  line-height: 14px;
`;

const MapSection = () => (
  <MapFrame>
    <MapDrawing />
    <PlaceCard>
      <div>
        <PlaceTitle>ул. Вишняковой, 2</PlaceTitle>
        ул. Вишняковой, 2, Краснодар,<br />Краснодарский край, 350001
        <Enlarge href="#">Увеличить карту</Enlarge>
      </div>
      <RouteLink href="#">
        <svg width="22" height="22" viewBox="0 0 22 22" fill="none" aria-hidden="true">
          <path d="M4 4L11 11" stroke="#c4c4c4" strokeWidth="4" />
          <path d="M11 21V14Q11 11 17 6" stroke="#8b8b8b" strokeWidth="4" />
          <path d="M12 2H20V10Z" fill="#8b8b8b" />
        </svg>
        Маршруты
      </RouteLink>
    </PlaceCard>
    <Satellite aria-label="Спутник">
      <svg width="37" height="37" viewBox="0 0 37 37" aria-hidden="true">
        <rect width="37" height="37" fill="#5f5f5f" />
        <path d="M0 14Q10 18 17 27Q22 34 24 37H0Z" fill="#727272" />
        <path d="M2 3L9 1 12 8 5 10ZM14 4L20 2 19 12 13 10ZM25 6L34 9 30 17 24 13ZM18 16L26 20 22 25ZM29 23L36 21 33 31ZM3 27L8 33 2 35Z" fill="#3b3948" />
        <path d="M0 11L37 4M10 0L36 30M24 0L14 22M37 16L20 32" stroke="#7c7c7c" />
      </svg>
    </Satellite>
    <ZoomBox>
      <ZoomButton aria-label="Приблизить">
        <svg width="18" height="18" viewBox="0 0 18 18" fill="#616161"><path d="M7 0h4v7h7v4h-7v7H7v-7H0V7h7z" /></svg>
      </ZoomButton>
      <ZoomButton aria-label="Отдалить">
        <svg width="18" height="18" viewBox="0 0 18 18" fill="#616161"><path d="M0 7h18v4H0z" /></svg>
      </ZoomButton>
    </ZoomBox>
    <Credits>
      <span>Быстрые клавиши</span>
      <span>Картографические данные ©2024 Google</span>
      <a href="#">Условия</a>
    </Credits>
  </MapFrame>
);

/* ---------- contact section ---------- */

const Contact = styled(Container)`
  display: grid;
  grid-template-columns: 1fr 1fr;
  align-items: start;
  padding: 113px 0 108px;
`;

const Title = styled.h1`
  font-size: 40px;
  font-weight: 700;
  line-height: 52px;
`;

const Lead = styled.p`
  max-width: 560px;
  margin-top: 14px;
  font-size: 20px;
  line-height: 34px;
  color: #747474;
`;

const InfoGrid = styled.div`
  display: grid;
  grid-template-columns: 1fr 1fr;
  margin-top: 38px;
`;

const InfoTitle = styled.h2`
  font-size: 22px;
  font-weight: 700;
  line-height: 28px;
`;

const Info = styled.p<{ $top: number; $line: number }>`
  max-width: 260px;
  margin-top: ${(p) => p.$top}px;
  font-size: 16px;
  line-height: ${(p) => p.$line}px;
  color: #8a8a8a;
`;

const InfoBlock = styled.div`
  & + & { margin-top: 30px; }
`;

const Socials = styled.div`
  display: flex;
  gap: 18px;
  margin-top: 28px;
  padding-left: 8px;
  color: #8a8a8a;
  a { display: flex; }
`;

const Form = styled.form`
  display: grid;
  grid-template-columns: 1fr 1fr;
  grid-template-rows: 40px 40px 140px 62px;
  column-gap: 31px;
  row-gap: 30px;
`;

const Field = styled.input`
  width: 100%;
  height: 40px;
  padding: 0 10px;
  border: 1px solid #dfdfdf;
  border-radius: 0;
  font: 15px ${serif};
  &::placeholder { color: #8c8c8c; }
`;

const Message = styled.textarea`
  grid-column: 1 / -1;
  display: block;
  width: 100%;
  height: 140px;
  padding: 10px;
  border: 1px solid #dfdfdf;
  font: 15px/20px ${serif};
  resize: vertical;
  &::placeholder { color: #8c8c8c; }
`;

const Submit = styled.button`
  grid-column: 1 / -1;
  justify-self: start;
  height: 62px;
  margin-top: -17px;
  padding: 0 35px;
  border: 0;
  border-radius: 31px;
  background: #5759e0;
  color: #fff;
  font: 15px ${serif};
`;

/* ---------- footer ---------- */

const Footer = styled.footer`
  padding-top: 120px;
  min-height: 400px;
  background: #0a051d;
  color: #fff;
`;

const FooterGrid = styled(Container)`
  display: grid;
  grid-template-columns: 300px repeat(3, 330px);
  padding-left: 30px;
`;

const ContactSection = () => (
  <Contact as="main">
    <div>
      <Title>Свяжитесь с нами</Title>
      <Lead>Компания Юбилинк поставщик широкого спектра услуг на базе собственного дата-центра с запланированным пространством в 300 стоечных мест</Lead>
      <InfoGrid>
        <div>
          <InfoTitle>Контакты</InfoTitle>
          <Info $top={16} $line={28}>г. Краснодар, ул. Вишняковой 2 литер Е</Info>
          <Info $top={22} $line={30}>
            Телефон: <a href="tel:+78007075005">+7 (800) 707-50-05</a><br />
            Эл. почта: <a href="mailto:support@ubilink.ru">support@ubilink.ru</a>
          </Info>
        </div>
        <div>
          <InfoBlock>
            <InfoTitle>График работы</InfoTitle>
            <Info $top={16} $line={30}>Пн. - Пт.: 09:00 - 19:00<br />Выходные: 10:00 - 16:00</Info>
          </InfoBlock>
          <InfoBlock>
            <InfoTitle>Подписывайтесь</InfoTitle>
            <Socials>
              <a href="#" aria-label="ВКонтакте"><FaVk size={18} /></a>
              <a href="#" aria-label="Одноклассники"><FaOdnoklassniki size={18} /></a>
              <a href="#" aria-label="Telegram"><FaTelegram size={18} /></a>
            </Socials>
          </InfoBlock>
        </div>
      </InfoGrid>
    </div>
    <Form onSubmit={(e) => e.preventDefault()}>
      <Field aria-label="Имя" placeholder="Имя" />
      <Field aria-label="Фамилия" placeholder="Фамилия" />
      <Field type="email" aria-label="Email-адрес" placeholder="Email-адрес" />
      <Field type="tel" aria-label="Телефон" placeholder="Телефон" />
      <Message aria-label="Сообщение" placeholder="Напиши сообщение" />
      <Submit type="submit">Отправить сообщение</Submit>
    </Form>
  </Contact>
);

export default function App() {
  return (
    <Page>
      <GlobalStyle />
      <header>
        <TopBar>
          <TopRow>
            <TopGroup $gap={8}>
              <span>Подписывайтесь :</span>
              <TopIcons>
                <a href="#" aria-label="ВКонтакте"><FaVk size={11} /></a>
                <a href="#" aria-label="Одноклассники"><FaOdnoklassniki size={11} /></a>
                <a href="#" aria-label="Telegram"><FaTelegram size={11} /></a>
              </TopIcons>
            </TopGroup>
            <TopGroup $gap={20}>
              <a href="#">О компании</a>
              <a href="#">Вопросы</a>
              <PhoneLink href="tel:+78007075005">
                <span>Позвонить нам :</span>
                <PhoneNumber>+7 (800) 707-50-05</PhoneNumber>
              </PhoneLink>
            </TopGroup>
          </TopRow>
        </TopBar>
        <NavRow>
          <Logo />
          <Nav>
            <NavLink href="#">Главная</NavLink>
            <NavLink href="#">О компании</NavLink>
            <NavLink href="#">Цена</NavLink>
            <NavLink href="#">Услуги</NavLink>
            <NavLink href="#">Отзывы</NavLink>
            <NavLink href="#" $active>Контакты</NavLink>
          </Nav>
        </NavRow>
      </header>
      <MapSection />
      <ContactSection />
      <Footer>
        <FooterGrid>
          <Logo />
          <InfoTitle>Связаться с нами</InfoTitle>
          <InfoTitle>График работы</InfoTitle>
          <InfoTitle>График работы</InfoTitle>
        </FooterGrid>
      </Footer>
    </Page>
  );
}
